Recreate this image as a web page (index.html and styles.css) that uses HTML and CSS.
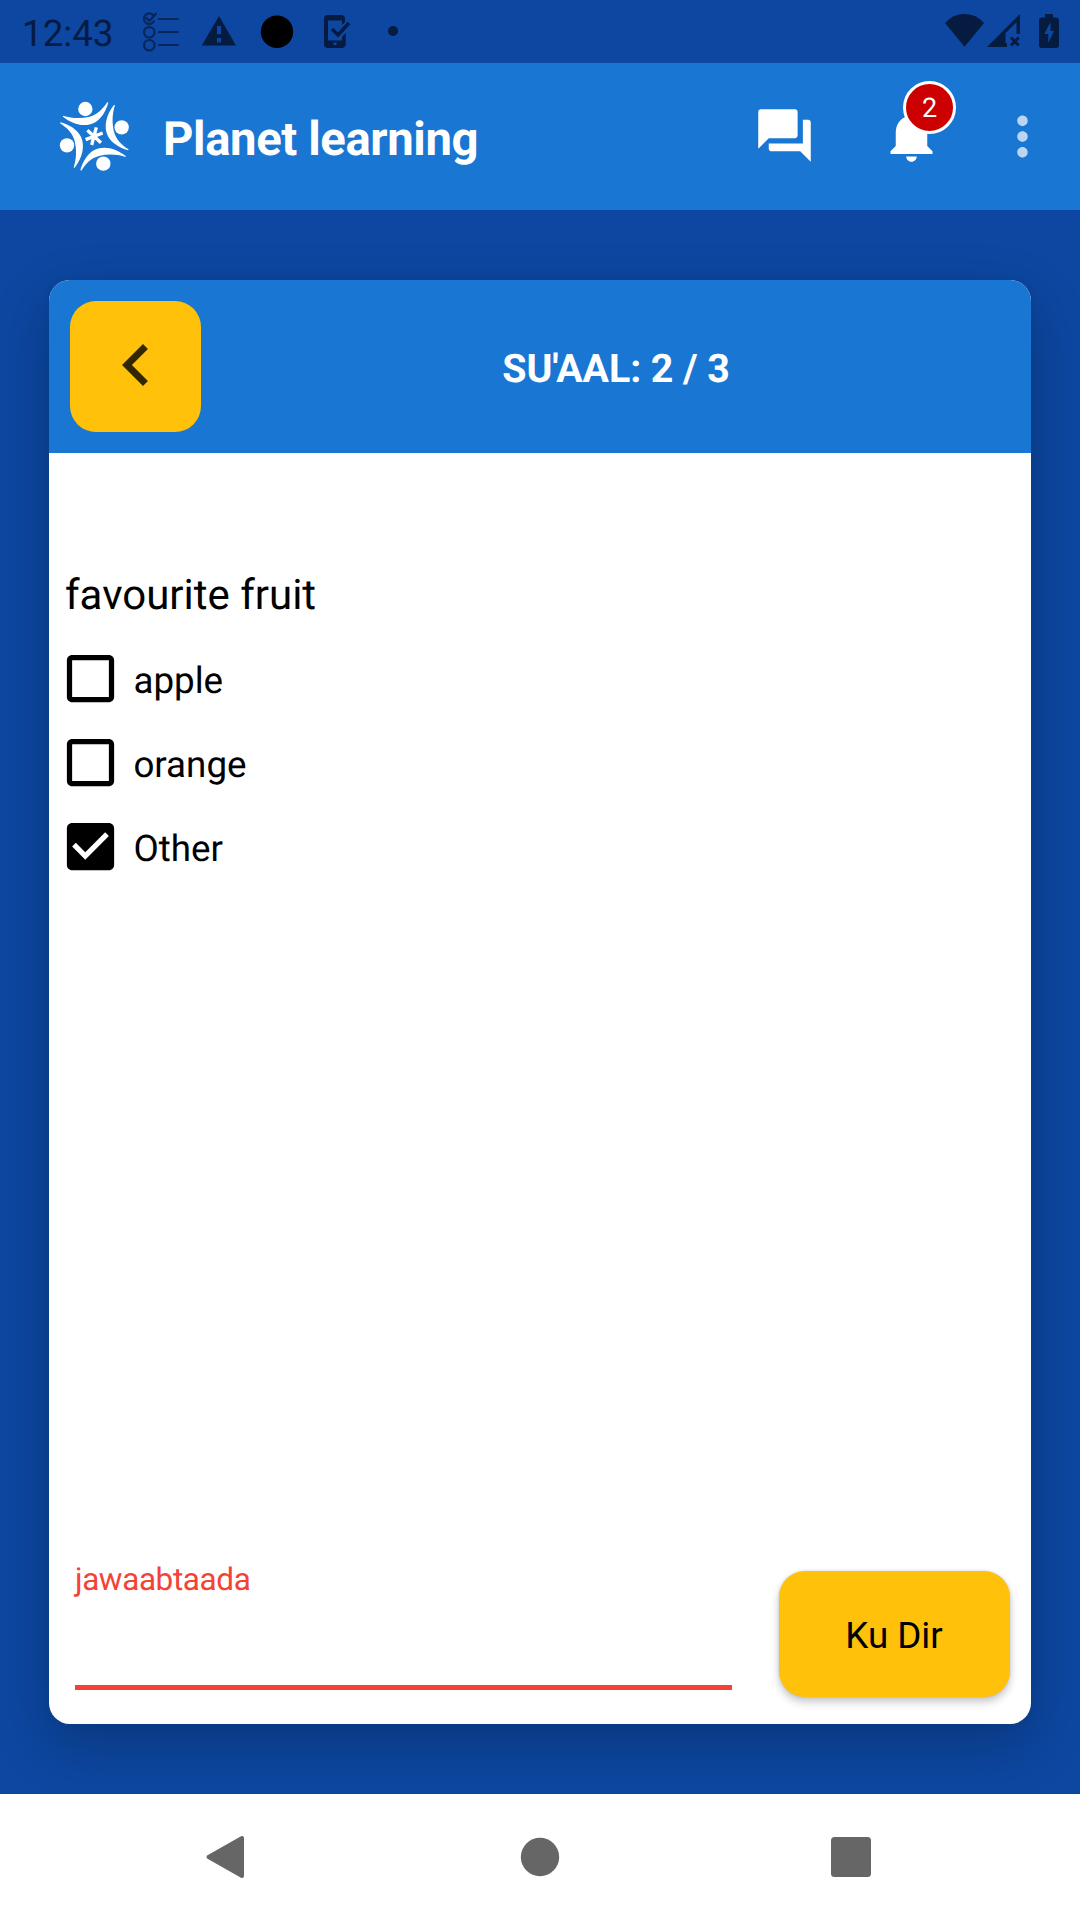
FILE: index.html
```html
<!DOCTYPE html>
<html lang="so">
<head>
<meta charset="utf-8">
<title>Planet learning</title>
<link rel="stylesheet" href="styles.css">
</head>
<body>
<div class="screen">
  <div class="status">
    <span class="clock">12:43</span>
    <svg class="status-left" viewBox="138 0 270 63" width="270" height="63">
      <g class="thin-icon">
        <path d="M158 19H178.600M158 32H178.600M158 45H178.600"/>
        <circle cx="149.300" cy="32.300" r="5.200"/><circle cx="149.300" cy="45.200" r="5.200"/>
        <path d="M153.500 15.500A5.300 5.300 0 1 0 154.300 20.500M146 17.500L149.500 21L156.500 13"/>
      </g>
      <path class="ink" fill-rule="evenodd" d="M219 16L236 45.500H201.800ZM217 26V34.300H221V26ZM217 38V42.500H221V38Z"/>
      <circle cx="277" cy="31.700" r="16.200"/>
      <path class="ink" fill-rule="evenodd" d="M328 15H341Q345 15 345 19V22L342 25V20.500H328V40.500H342V37L345.700 33V44Q345.700 48 341 48H328Q324 48 324 44V19Q324 15 328 15ZM333.500 42.500V45H336.500V42.500Z"/>
      <path class="tick" d="M332 29L338 35L349 23"/>
      <circle class="ink" cx="393" cy="31" r="5"/>
    </svg>
    <svg class="status-right" viewBox="940 0 125 63" width="125" height="63">
      <path class="ink" d="M945 23Q953 14 964.500 14T984 23L964.500 46.800Z"/>
      <path class="ink" fill-rule="evenodd" d="M1020 14V34H1016.500V22L1005.500 33V43H1007V47H987Z"/>
      <path class="cross" d="M1011 37.500L1018.700 45.500M1018.700 37.500L1011 45.500"/>
      <path class="ink" fill-rule="evenodd" d="M1045 14H1053V17.500H1056Q1059 17.500 1059 20.500V45Q1059 48 1056 48H1042Q1039 48 1039 45V20.500Q1039 17.500 1042 17.500H1045ZM1050.500 22L1044.300 34H1048.200V43L1054 31H1050.500Z"/>
    </svg>
  </div>

  <header class="appbar">
    <svg class="logo" viewBox="0 0 270 270" width="90" height="90">
      <defs>
        <g id="person">
          <circle cx="106" cy="57" r="21.500"/>
          <path d="M39 77C68 86 94 86 119 80C142 74 158 58 172 36L175 38C167 64 154 87 133 98C104 113 66 102 39 80Z"/>
        </g>
      </defs>
      <use href="#person"/>
      <use href="#person" transform="rotate(90 133 139)"/>
      <use href="#person" transform="rotate(180 133 139)"/>
      <use href="#person" transform="rotate(270 133 139)"/>
      <path class="star" d="M139 112L125 165M158 129L107 149M112 121L153 158"/>
    </svg>
    <h1 class="app-title">Planet learning</h1>
    <svg class="chat" viewBox="0 0 24 24" width="63" height="63"><path d="M21 6h-2v9H6v2c0 .55.45 1 1 1h11l4 4V7c0-.55-.45-1-1-1zm-4 6V3c0-.55-.45-1-1-1H3c-.55 0-1 .45-1 1v14l4-4h10c.55 0 1-.45 1-1z"/></svg>
    <div class="bell-wrap">
      <svg class="bell" viewBox="0 0 24 24" width="63" height="63"><path d="M12 22c1.100 0 2-.9 2-2h-4c0 1.100.89 2 2 2zm6-6v-5c0-3.070-1.640-5.640-4.500-6.320V4c0-.83-.67-1.500-1.500-1.500s-1.500.67-1.500 1.500v.68C7.630 5.360 6 7.920 6 11v5l-2 2v1h16v-1l-2-2z"/></svg>
      <span class="badge">2</span>
    </div>
    <svg class="more" viewBox="0 0 24 24" width="63" height="63"><path d="M12 8c1.100 0 2-.9 2-2s-.9-2-2-2-2 .9-2 2 .9 2 2 2zm0 2c-1.100 0-2 .9-2 2s.9 2 2 2 2-.9 2-2-.9-2-2-2zm0 6c-1.100 0-2 .9-2 2s.9 2 2 2 2-.9 2-2-.9-2-2-2z"/></svg>
  </header>

  <main class="content">
    <section class="card">
      <div class="card-head">
        <button class="back" aria-label="Back"><svg viewBox="0 0 24 24" width="84" height="84"><path d="M15.410 7.410L14 6l-6 6 6 6 1.410-1.410L10.830 12z"/></svg></button>
        <h2 class="counter">SU'AAL: 2 / 3</h2>
      </div>
      <div class="card-body">
        <p class="question">favourite fruit</p>
        <ul class="options">
          <li><svg viewBox="0 0 24 24" width="63" height="63"><path d="M19 5v14H5V5h14m0-2H5c-1.100 0-2 .9-2 2v14c0 1.100.9 2 2 2h14c1.100 0 2-.9 2-2V5c0-1.100-.9-2-2-2z"/></svg><span>apple</span></li>
          <li><svg viewBox="0 0 24 24" width="63" height="63"><path d="M19 5v14H5V5h14m0-2H5c-1.100 0-2 .9-2 2v14c0 1.100.9 2 2 2h14c1.100 0 2-.9 2-2V5c0-1.100-.9-2-2-2z"/></svg><span>orange</span></li>
          <li><svg viewBox="0 0 24 24" width="63" height="63"><path d="M19 3H5c-1.110 0-2 .9-2 2v14c0 1.100.89 2 2 2h14c1.110 0 2-.9 2-2V5c0-1.100-.89-2-2-2zm-9 14l-5-5 1.410-1.410L10 14.170l7.590-7.590L19 8l-9 9z"/></svg><span>Other</span></li>
        </ul>
        <div class="answer">
          <div class="field"><span class="field-label">jawaabtaada</span></div>
          <button class="send">Ku Dir</button>
        </div>
      </div>
    </section>
  </main>

  <nav class="navbar">
    <svg viewBox="0 0 44 44" width="44" height="44"><path class="back-key" d="M3.500 22L37 3V41Z"/></svg>
    <svg viewBox="0 0 44 44" width="44" height="44"><circle cx="23" cy="22" r="19.200"/></svg>
    <svg viewBox="0 0 44 44" width="44" height="44"><rect x="2" y="2" width="40" height="40" rx="3.500"/></svg>
  </nav>
</div>
</body>
</html>
```
FILE: styles.css
```css
* { box-sizing: border-box; margin: 0; padding: 0; }
body { font-family: Roboto, "Liberation Sans", sans-serif; text-rendering: geometricPrecision; }
svg { display: block; flex: none; }
button { border: 0; font: inherit; color: #000; }

.screen {
  width: 1080px;
  height: 1920px;
  display: flex;
  flex-direction: column;
  background: #0d47a1;
  overflow: hidden;
}

.status { height: 63px; display: flex; align-items: center; padding: 0 15px 0 22px; }
.clock { width: 116px; font-size: 36.750px; line-height: 43px; padding-top: 3px; color: #051b40; }
.status-right { margin-left: auto; }
.ink { fill: #051b40; }
.thin-icon { fill: none; stroke: #07265a; stroke-width: 2.200; }
.tick { fill: none; stroke: #051b40; stroke-width: 3.500; }
.cross { stroke: #051b40; stroke-width: 3; }

.appbar {
  height: 147px;
  display: flex;
  align-items: center;
  padding: 0 26px 0 50px;
  background: #1976d2;
  fill: #fff;
}
.logo { margin-top: -3px; }
.star { fill: none; stroke: #fff; stroke-width: 10; }
.app-title { flex: 1; margin: 4px 0 0 23px; font-size: 47.250px; line-height: 56px; font-weight: 700; letter-spacing: -.400px; color: #fff; }
.chat { margin: -2px 64px 0 0; }
.bell-wrap { position: relative; margin: -2px 48px 0 0; }
.badge {
  position: absolute;
  left: 23px;
  top: -23px;
  width: 53px;
  height: 53px;
  border: 3px solid #fff;
  border-radius: 50%;
  background: #c00;
  color: #fff;
  font-size: 27px;
  line-height: 48px;
  text-align: center;
}
.more { margin-top: -1px; opacity: .7; }

.content { flex: 1; display: flex; padding: 70px 49px; }
.card {
  flex: 1;
  display: flex;
  flex-direction: column;
  background: #fff;
  border-radius: 21px;
  overflow: hidden;
  box-shadow: 0 20px 56px rgba(0, 0, 0, .24), 0 0 12px rgba(0, 0, 0, .03);
}
.card-head { height: 173px; display: flex; align-items: center; padding: 0 0 0 21px; background: #1976d2; }
.back { width: 131px; height: 131px; display: flex; align-items: center; justify-content: center; border-radius: 26px; background: #ffc10a; fill: #332702; }
.back svg { margin-top: -3px; }
.counter { flex: 1; padding-top: 4px; text-align: center; font-size: 39.375px; line-height: 46px; font-weight: 700; letter-spacing: -.100px; color: #fff; }

.card-body { flex: 1; display: flex; flex-direction: column; padding: 118px 21px 27px 16px; }
.question { font-size: 42px; line-height: 49px; }
.options { list-style: none; padding-top: 17px; }
.options li { height: 84px; display: flex; align-items: center; gap: 11px; margin-left: -5.600px; font-size: 36.750px; line-height: 43px; }
.options svg { margin-top: -1px; }
.options span { padding-top: 3px; }

.answer { margin-top: auto; display: flex; justify-content: space-between; padding-left: 10px; }
.field { width: 657px; height: 119px; border-bottom: 5px solid #f44336; }
.field-label { display: block; margin-top: -10px; font-size: 31.500px; line-height: 37px; letter-spacing: -.400px; color: #f44336; }
.send {
  width: 231px;
  height: 126px;
  padding: 3px 1px 0 0;
  border-radius: 26px;
  background: #ffc10a;
  font-size: 36.750px;
  box-shadow: 0 5px 8px rgba(0, 0, 0, .22), 0 0 3px rgba(0, 0, 0, .14);
}

.navbar { height: 126px; display: flex; justify-content: space-between; padding: 41px 207px 0 205px; background: #fff; fill: #666; }
.back-key { stroke: #666; stroke-width: 4; stroke-linejoin: round; }
```
